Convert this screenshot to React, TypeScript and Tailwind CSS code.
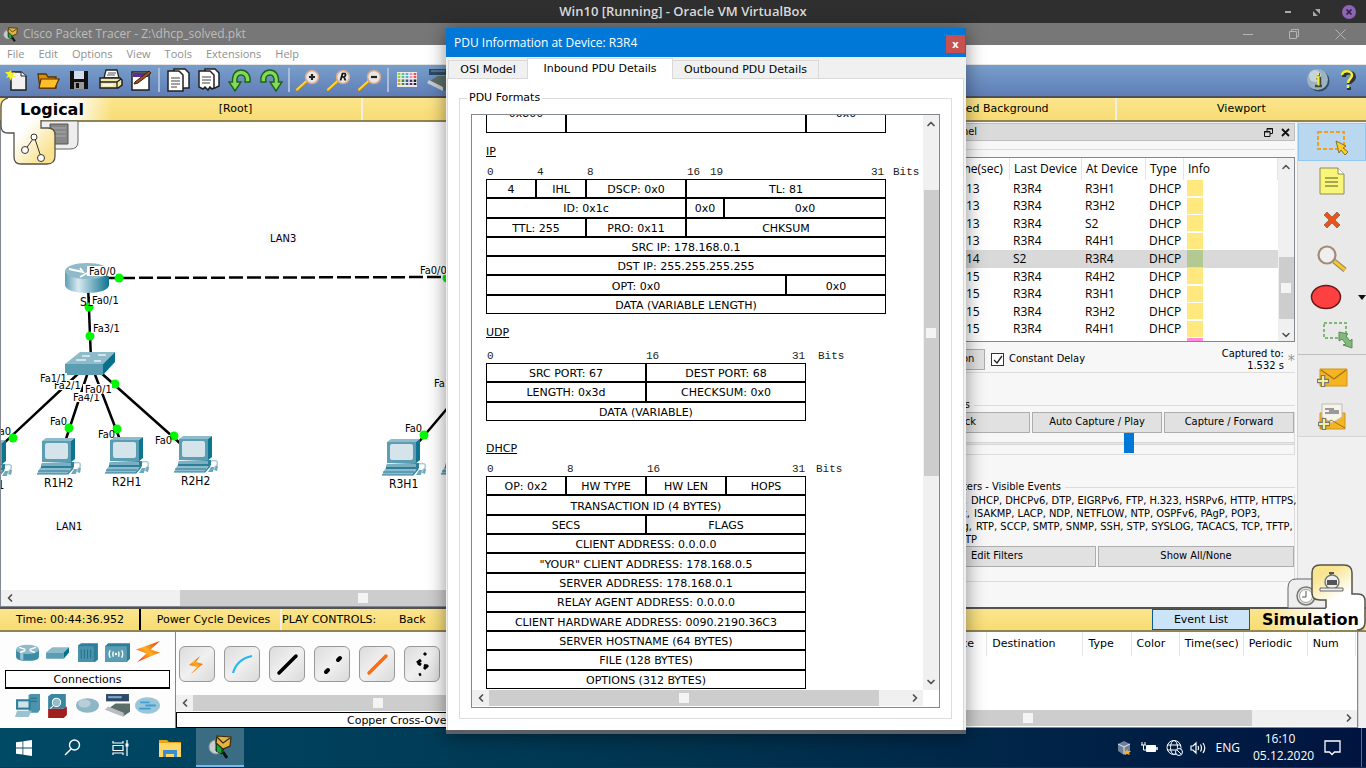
import type { ReactNode } from "react";
import { ChevronDown, ChevronLeft, ChevronRight, ChevronUp } from "lucide-react";

const verdana = "font-['DejaVu_Sans',Verdana,sans-serif]";
const tahoma = "font-['DejaVu_Sans_Condensed','Noto_Sans',Tahoma,sans-serif]";
const segoe = "font-['Open_Sans','Noto_Sans','Segoe_UI',sans-serif]";

/* ---------- small shared drawings ---------- */

function TracerLogo({ size }: { size: number }) {
  return (
    <svg width={size} height={size} viewBox="0 0 24 24" aria-hidden="true">
      <circle cx="8" cy="12" r="7" fill="#c9cdd0" stroke="#8d9294" />
      <path d="M15 17l4 6" stroke="#111" strokeWidth="3" />
      <path d="M8 5l9 5-3 9-6-3z" fill="#0b6b1c" stroke="#04300a" />
      <path d="M10 9v8M12 10v8" stroke="#37d957" strokeWidth="1" />
      <path d="M9 1l14 1-1 9-7 3-7-6z" fill="#e3b445" stroke="#3b2a06" strokeWidth="1.2" />
      <path d="M9 2l6 6 7-5" fill="none" stroke="#3b2a06" strokeWidth="1.2" />
    </svg>
  );
}

function HScroll({ before, thumb, end }: { before: string; thumb: string; end?: boolean }) {
  return (
    <div className="flex h-4 w-full items-center bg-[#f0f0f0]">
      <button aria-label="Scroll left" className="flex h-4 w-[17px] shrink-0 items-center justify-center text-[#505050]">
        <ChevronLeft size={12} strokeWidth={3.5} />
      </button>
      <div className={`h-full shrink-0 ${before}`} />
      <div className={`flex h-full items-center justify-center bg-[#cdcdcd] ${thumb}`}>
        <span className="size-[10px] bg-[#f4f4f4]" />
      </div>
      {end && (
        <button aria-label="Scroll right" className="ml-auto flex h-4 w-[17px] items-center justify-center text-[#505050]">
          <ChevronRight size={12} strokeWidth={3.5} />
        </button>
      )}
    </div>
  );
}

/* ---------- toolbar ---------- */

const toolIcons: Record<string, ReactNode> = {
  New: (
    <>
      <path d="M8 6h10l5 4v14H8z" fill="#f2f2f2" stroke="#222" strokeWidth="1.5" />
      <path d="M18 6v4h5" fill="#fff" stroke="#222" />
      <path d="M8 4l1 3 3-1-2 3 3 2-4 0-1 4-2-4-3 1 2-3-3-3 4 0z" fill="#f6f02a" />
    </>
  ),
  Open: (
    <>
      <path d="M4 8h8l2 3h8v11H6z" fill="#e08e00" stroke="#5a3200" strokeWidth="1.3" />
      <path d="M7 13h18l-4 9H5z" fill="#ffbf2b" stroke="#5a3200" strokeWidth="1.2" />
    </>
  ),
  Save: (
    <>
      <path d="M5 5h18v18H5z" fill="#111" />
      <path d="M9 5h10v8H9z" fill="#d5dbe8" />
      <path d="M9 16h10v7H9z" fill="#999" />
      <path d="M11 17h3v5h-3z" fill="#111" />
    </>
  ),
  Print: (
    <>
      <path d="M10 4h11l2 8H8z" fill="#fff" stroke="#222" strokeWidth="1.3" />
      <path d="M12 7h8M11 9h8" stroke="#555" />
      <path d="M4 12h20l2 2v5l-4 3H4z" fill="#efe9a8" stroke="#222" strokeWidth="1.5" />
      <path d="M4 16h17v6M21 16l4-3" fill="none" stroke="#222" strokeWidth="1.3" />
      <path d="M7 19h10" stroke="#fffbe0" strokeWidth="2" />
    </>
  ),
  Wizard: (
    <>
      <path d="M5 6h17v18H5z" fill="#fff" stroke="#222" strokeWidth="1.5" />
      <path d="M6 7h15v4H6z" fill="#5a2ca0" />
      <path d="M8 16L22 5l2 2-13 10-4 1z" fill="#a8501c" stroke="#321" />
    </>
  ),
  Copy: (
    <>
      <path d="M10 3h11l4 4v15H10z" fill="#fff" stroke="#222" strokeWidth="1.5" />
      <path d="M4 5h11l4 4v16H4z" fill="#fff" stroke="#222" strokeWidth="1.5" />
      <path d="M7 12h9M7 15h9M7 18h9M7 21h6" stroke="#444" strokeWidth="1.2" />
    </>
  ),
  Paste: (
    <>
      <path d="M10 3h10l4 4v13l-4 2H10z" fill="#fff" stroke="#222" strokeWidth="1.5" />
      <path d="M4 5h11l4 4v13l-2 1-2-2-2 3-3-3-2 2-4-2z" fill="#fff" stroke="#222" strokeWidth="1.5" />
      <path d="M7 11h9M7 14h9M7 17h8" stroke="#444" strokeWidth="1.2" />
    </>
  ),
  Undo: (
    <path
      d="M24 16c1-8-4-12-9-12S6 8 6.500 16H3l6 9 6-9h-4c-.5-5 1-7 4-7s5 2 4 7z"
      fill="#7fdc55"
      stroke="#245f1c"
      strokeWidth="1.4"
    />
  ),
  Redo: (
    <path
      d="M4 16C3 8 8 4 13 4s9 4 8.500 12H25l-6 9-6-9h4c.5-5-1-7-4-7s-5 2-4 7z"
      fill="#7fdc55"
      stroke="#245f1c"
      strokeWidth="1.4"
    />
  ),
  "Zoom In": <ZoomGlyph mark="+" />,
  "Zoom Reset": <ZoomGlyph mark="R" />,
  "Zoom Out": <ZoomGlyph mark="-" />,
  Palette: (
    <>
      <path d="M4 6h20v15H4z" fill="#efe9ec" />
      {["#8bd44a", "#52c98c", "#4ab4e0", "#ef8fb4", "#ef5050"].map((c, i) => (
        <path key={c} d={`M${6 + i * 4} 7v7`} stroke={c} strokeWidth="2.600" strokeDasharray="2 1" />
      ))}
      {["#c8a030", "#3a8a30", "#285a9c", "#50307c", "#202020"].map((c, i) => (
        <path key={c} d={`M${6 + i * 4} 14v6`} stroke={c} strokeWidth="2.600" strokeDasharray="2 1" />
      ))}
    </>
  ),
  Devices: (
    <>
      <path d="M5 3h22v6H5z" fill="#2e4a66" />
      <path d="M7 5h14" stroke="#7f9ab8" />
      <path d="M4 16l10-6h14v10l-8 5z" fill="#5c6e68" />
      <path d="M3 17l16 8v-4L5 14z" fill="#c9ccd0" />
    </>
  ),
};

function ZoomGlyph({ mark }: { mark: string }) {
  return (
    <>
      <path d="M3 24L13 15" stroke="#c08a10" strokeWidth="3" strokeLinecap="round" />
      <path d="M3 23.500L13 14.500" stroke="#ffd52e" strokeWidth="2" strokeLinecap="round" />
      <circle cx="18" cy="11" r="6.500" fill="#e9e6e6" stroke="#d9a98a" strokeWidth="1.600" />
      {mark === "+" && <path d="M15 11h6M18 8v6" stroke="#222" strokeWidth="2.200" />}
      {mark === "-" && <path d="M15 11h6" stroke="#222" strokeWidth="2.200" />}
      {mark === "R" && <path d="M15.500 14.500l2-7h2.500q1.500 2-1 3.500h-2 2l1.500 3.500" fill="none" stroke="#111" strokeWidth="1.700" />}
    </>
  );
}

function ToolGroup({ names }: { names: string[] }) {
  return (
    <div className="flex items-center">
      {names.map((n) => (
        <button key={n} aria-label={n} className="flex h-7 w-[31px] items-center justify-center">
          <svg width="28" height="28" viewBox="0 0 28 28" aria-hidden="true">
            {toolIcons[n]}
          </svg>
        </button>
      ))}
    </div>
  );
}

function Toolbar() {
  const groups = [
    ["New", "Open", "Save", "Print", "Wizard"],
    ["Copy", "Paste", "Undo", "Redo"],
    ["Zoom In", "Zoom Reset", "Zoom Out"],
    ["Palette", "Devices"],
  ];
  return (
    <div className="flex h-[33px] items-center border-b-2 border-[#4d4f59] bg-linear-to-b from-[#789fcb] to-[#5f7db6] pb-[2px] pl-px">
      {groups.map((g, i) => (
        <div key={g[0]} className="flex items-center">
          {i > 0 && <span className="mx-[2px] h-6 w-[2px] bg-[#a9bcd9]" />}
          <ToolGroup names={g} />
        </div>
      ))}
      <div className="ml-auto flex items-center gap-2 pr-2">
        <button aria-label="Info">
          <svg width="24" height="24" viewBox="0 0 24 24" aria-hidden="true">
            <circle cx="13" cy="13" r="10.500" fill="#2f4c63" />
            <circle cx="11.500" cy="11.500" r="10.500" fill="#9db4c0" />
            <circle cx="9" cy="8" r="6" fill="#c5d3da" />
            <path d="M10 10h4v8M9 18h7M12.500 5v3" stroke="#444" strokeWidth="2.500" fill="none" />
            <path d="M9.500 9.500h3v8M12 5v2.500" stroke="#f3f03a" strokeWidth="2" fill="none" />
          </svg>
        </button>
        <button aria-label="Help">
          <svg width="20" height="24" viewBox="0 0 20 24" aria-hidden="true">
            <path d="M6 9c0-6 10-6 10 0 0 4-5 4-5 7M11 19v3" stroke="#333" strokeWidth="4" fill="none" />
            <path d="M4 7c0-5 10-5 10 0 0 4-4 4-4 8M10 17v3" stroke="#f6f032" strokeWidth="2.500" fill="none" />
          </svg>
        </button>
      </div>
    </div>
  );
}

/* ---------- logical / root bar ---------- */

function WorkspaceBar() {
  const cell = "flex items-center justify-center border-l-2 border-[#f1efe6]";
  return (
    <div className={`relative flex h-6 border-b-2 border-[#8f8454] bg-linear-to-b from-[#fbe58d] to-[#f8dc72] text-[11px] ${verdana}`}>
      <svg className="absolute left-0 top-0 z-10" width="120" height="68" viewBox="0 0 120 68" aria-hidden="true">
        <defs>
          <linearGradient id="tabFade" x1="0" x2="1">
            <stop offset="0.6" stopColor="#fff" />
            <stop offset="1" stopColor="#fff" stopOpacity="0" />
          </linearGradient>
          <linearGradient id="tabGold" x1="0" x2="1" y1="0" y2="1">
            <stop offset="0.45" stopColor="#fff" />
            <stop offset="0.85" stopColor="#f9e391" />
          </linearGradient>
        </defs>
        <path d="M40 23h38v21q0 7-8 7H40z" fill="#eee" stroke="#666" />
        <path d="M50 26h18v20H50z" fill="#888" stroke="#555" />
        <path d="M52 30h14M52 34h14M52 38h14" stroke="#aaa" />
        <path d="M8 0h104v22H8z" fill="url(#tabFade)" />
        <path d="M8 0Q1 2 1 8v20q0 7 7 7h6v24q0 7 7 7h26q8 0 8-8V37q0-7-7-7h-7v-9V0z" fill="url(#tabGold)" />
        <path d="M8 0Q1 2 1 8v20q0 7 7 7h6v24q0 7 7 7h26q8 0 8-8V37q0-7-7-7h-7v-8" fill="none" stroke="#55534a" strokeWidth="1.300" />
        <path d="M33 41L25 52M35 41l6 18" stroke="#333" />
        <circle cx="34" cy="39" r="3" fill="#fff" stroke="#333" />
        <circle cx="25" cy="52" r="3.500" fill="#fff" stroke="#333" />
        <circle cx="41" cy="60" r="3.500" fill="#fff" stroke="#333" />
      </svg>
      <strong className="relative z-20 w-[110px] pl-5 text-base leading-[24px]">Logical</strong>
      <button className="w-[251px]">[Root]</button>
      <div className="grid flex-1 grid-cols-4">
        <button className={cell}>New Cluster</button>
        <button className={cell}>Move Object</button>
        <button className={cell}>Set Tiled Background</button>
        <button className={cell}>Viewport</button>
      </div>
    </div>
  );
}

/* ---------- topology ---------- */

function Pc({ x, y }: { x: number; y: number }) {
  return (
    <g transform={`translate(${x} ${y})`}>
      <path d="M37 25q8-2 6 4l-6 6" fill="none" stroke="#a9cbd8" strokeWidth="1.500" />
      <path d="M34 36l3-5h3l-1 5zM40 34l2-4h2l-1 5z" fill="#6fa7bb" />
      <path d="M5 3l4-3h29l-4 3z" fill="#8fbccc" />
      <path d="M34 3l4-3v21l-5 4z" fill="#0e7591" />
      <path d="M5 3h29v21H5z" fill="#5b9db3" />
      <rect x="8" y="5" width="23" height="16" rx="2" fill="#d4e4ea" />
      <path d="M5 25l32-1v5l-3 3H3z" fill="#2d7f99" />
      <path d="M5 25h29v3H4z" fill="#79afc1" />
      <path d="M3 30h32l-4 6H0z" fill="#8fbccc" />
      <path d="M1 33h31M0 36h31l5-6" fill="none" stroke="#2d7f99" strokeWidth="1.200" />
    </g>
  );
}

function Topology() {
  const dots = [
    [119, 278], [89, 307], [90, 336], [115, 384], [13, 438], [69, 428], [117, 429], [174, 436], [424, 435], [447, 278],
  ];
  const labels: [string, number, number][] = [
    ["Fa2/1", 54, 389], ["Fa4/1", 73, 401], ["Fa1/1", 40, 382], ["Fa0/1", 85, 393], ["Fa0/0", 89, 275],
    ["Fa0/1", 92, 304], ["Fa3/1", 93, 332], ["Fa0", -6, 435], ["Fa0", 50, 425], ["Fa0", 98, 438], ["Fa0", 155, 444],
    ["Fa0", 405, 432], ["Fa0/0", 420, 274], ["Fa1/1", 434, 387],
  ];
  const names: [string, number, number][] = [
    ["R1H1", -25, 489], ["R1H2", 44, 487], ["R2H1", 112, 486], ["R2H2", 181, 485], ["R3H1", 389, 488], ["S1", 80, 306],
  ];
  const areas: [string, number, number][] = [["LAN3", 270, 242], ["LAN1", 56, 530]];
  return (
    <svg width="838" height="468" viewBox="1 122 838 468" className={`block text-[11px] ${tahoma}`} role="img" aria-label="Network topology">
      <defs>
        <linearGradient id="router" x1="0" x2="1">
          <stop offset="0" stopColor="#5d9fb5" />
          <stop offset="0.3" stopColor="#d8e9ef" />
          <stop offset="1" stopColor="#0f7390" />
        </linearGradient>
      </defs>
      <g stroke="#000" strokeWidth="2.500" fill="none">
        <path d="M90 278L450 277" strokeDasharray="14 4" strokeDashoffset="5" />
        <path d="M88 285L91 360M80 372L-12 458M88 372L64 445M94 372L122 445M100 372L182 445M484 365L412 450" />
      </g>
      <rect x="266" y="232" width="31" height="12" fill="#f7f7ff" />
      <rect x="53" y="520" width="31" height="12" fill="#f7f7ff" />
      <path d="M65 271v14c0 5 10 8 22 8s22-3 22-8v-14z" fill="url(#router)" />
      <ellipse cx="87" cy="271" rx="22" ry="8" fill="#8fbaca" />
      <path d="M69 269l14 3-3-4M80 277l9-5" stroke="#fff" strokeWidth="1.800" fill="none" />
      <path d="M65 364l15-12h35l-12 12z" fill="#8fbaca" />
      <path d="M65 364h38v11H65z" fill="#5b9db3" />
      <path d="M103 364l12-12v10l-12 13z" fill="#07708c" />
      <path d="M76 360h10M82 356h8M94 361h7M98 355h8" stroke="#e6f2f6" strokeWidth="1.500" />
      <Pc x={-32} y={440} />
      <Pc x={37} y={438} />
      <Pc x={105} y={437} />
      <Pc x={174} y={436} />
      <Pc x={382} y={439} />
      <Pc x={441} y={438} />
      {dots.map(([x, y]) => (
        <circle key={`${x}-${y}`} cx={x} cy={y} r="4.500" fill="#00f900" />
      ))}
      {names.map(([t, x, y]) => (
        <text key={t} x={x} y={y} className="text-xs">{t}</text>
      ))}
      {areas.map(([t, x, y]) => (
        <text key={t} x={x} y={y}>{t}</text>
      ))}
      {labels.map(([t, x, y]) => (
        <g key={`${t}-${x}`}>
          <rect x={x - 2} y={y - 9} width={t.length * 6 - 1} height="10" fill="#fff" />
          <text x={x} y={y}>{t}</text>
        </g>
      ))}
    </svg>
  );
}

/* ---------- simulation panel ---------- */

const events = [
  ["0.013", "R3R4", "R3H1"],
  ["0.013", "R3R4", "R3H2"],
  ["0.013", "R3R4", "S2"],
  ["0.013", "R3R4", "R4H1"],
  ["0.014", "S2", "R3R4"],
  ["0.015", "R3R4", "R4H2"],
  ["0.015", "R3R4", "R3H1"],
  ["0.015", "R3R4", "R3H2"],
  ["0.015", "R3R4", "R4H1"],
];

const filterLines = [
  ["CDP,", "DHCP, DHCPv6, DTP, EIGRPv6, FTP, H.323, HSRPv6, HTTP, HTTPS,", "grid-cols-[127px_1fr]"],
  ["IPSec,", "ISAKMP, LACP, NDP, NETFLOW, NTP, OSPFv6, PAgP, POP3,", "grid-cols-[130px_1fr]"],
  ["RIPng,", "RTP, SCCP, SMTP, SNMP, SSH, STP, SYSLOG, TACACS, TCP, TFTP,", "grid-cols-[132px_1fr]"],
  ["VTP", "", "grid-cols-[137px_1fr]"],
];

const winButton = "h-[21px] border border-[#adadad] bg-[#e1e1e1]";

function SimulationPanel() {
  return (
    <section className={`flex w-[457px] shrink-0 flex-col bg-[#f7f7f7] pr-[2px] text-[11px] ${tahoma}`}>
      <header className="mt-px flex h-[18px] items-center border border-[#bdbdbd] bg-[#dadada] pl-[46px] pr-1">
        <span className="w-[90px] text-right">Simulation Panel</span>
        <button aria-label="Float panel" className="ml-auto mr-2">
          <svg width="9" height="9" viewBox="0 0 9 9" aria-hidden="true">
            <path d="M3 3V.5h5.500v5H6M.5 3.500H6v5H.5zM3 1h6M0 4h6" fill="none" stroke="#111" />
          </svg>
        </button>
        <button aria-label="Close panel">
          <svg width="9" height="9" viewBox="0 0 9 9" aria-hidden="true">
            <path d="M1 1l7 7M8 1L1 8" stroke="#111" strokeWidth="1.800" />
          </svg>
        </button>
      </header>
      <div className="mt-2 border-t border-[#dcdcdc] pt-[7px]">
        <div className={`flex h-[185px] border border-[#828790] bg-white text-xs ${segoe}`}>
          <div className="min-w-0 flex-1 overflow-hidden">
            <table className="h-[180px] w-full table-fixed border-separate border-spacing-0 text-left">
              <colgroup>
                <col />
                <col className="w-[64px]" />
                <col className="w-[72px]" />
                <col className="w-[64px]" />
                <col className="w-[38px]" />
                <col className="w-[94px]" />
              </colgroup>
              <thead>
                <tr className="h-[22px]">
                  {["Vis.", "Time(sec)", "Last Device", "At Device", "Type", "Info"].map((h) => (
                    <th key={h} className="border-r border-[#e5e5e5] p-0 pl-1 font-normal whitespace-nowrap">{h}</th>
                  ))}
                </tr>
              </thead>
              <tbody>
                {events.map((e, i) => (
                  <tr key={i} className={i === 4 ? "bg-[#d9d9d9]" : ""}>
                    <td />
                    {e.map((c, k) => (
                      <td key={k} className="py-0 pl-[3px] leading-4">{c}</td>
                    ))}
                    <td className="py-0 pl-[3px] leading-4">DHCP</td>
                    <td className={i === 4 ? "p-0 pl-[3px]" : "p-0 pb-px pl-[3px]"}>
                      <div className={i === 4 ? "h-[17px] w-4 bg-[#b3c994]" : "h-4 w-4 bg-[#ffe97f]"} />
                    </td>
                  </tr>
                ))}
              </tbody>
            </table>
            <div className="flex justify-end pr-[75px]"><span className="h-1 w-4 bg-[#ff8ce0]" /></div>
          </div>
          <div className="flex w-4 flex-col items-center bg-[#f0f0f0] text-[#505050]">
            <button aria-label="Scroll up" className="py-[3px]"><ChevronUp size={12} strokeWidth={3} /></button>
            <div className="mt-[81px] flex h-[62px] w-[15px] items-center justify-center bg-[#cdcdcd]">
              <span className="size-[10px] bg-[#f4f4f4]" />
            </div>
            <button aria-label="Scroll down" className="mt-auto"><ChevronDown size={12} strokeWidth={3} /></button>
          </div>
        </div>
        <div className="mt-[7px] flex h-[24px] items-start border-b border-[#dcdcdc]">
          <button className={`${winButton} ml-[40px] w-[105px] whitespace-nowrap`}>Reset Simulation</button>
          <label className="ml-[6px] flex h-[21px] items-center gap-[5px]">
            <span className="relative flex">
              <input type="checkbox" defaultChecked className="size-[13px] appearance-none border border-[#333] bg-white" />
              <svg className="pointer-events-none absolute left-[2px] top-[2px]" width="10" height="10" viewBox="0 0 10 10" aria-hidden="true">
                <path d="M1 5l3 3 5-7" fill="none" stroke="#222" strokeWidth="1.300" />
              </svg>
            </span>
            Constant Delay
          </label>
          <p className="-mt-px ml-auto text-right leading-[12px]">Captured to:<br />1.532 s</p>
          <span className="ml-1 pt-1 text-base leading-4 text-[#999]">*</span>
        </div>
      </div>
      <div className="mt-6 flex items-center gap-1 leading-4">
        <span className="w-[130px] text-right">Play Controls</span>
        <span className="h-px flex-1 bg-[#dcdcdc]" />
      </div>
      <div className="-mt-px border-r border-b border-[#dcdcdc]">
        <div className="flex gap-[2px]">
          <button className={`${winButton} ml-[58px] w-[132px]`}>Back</button>
          <button className={`${winButton} flex-1`}>Auto Capture / Play</button>
          <button className={`${winButton} flex-1`}>Capture / Forward</button>
        </div>
        <input
          type="range"
          aria-label="Play speed"
          defaultValue={64}
          className="block h-[21px] w-full appearance-none bg-transparent [&::-webkit-slider-runnable-track]:h-[3px] [&::-webkit-slider-runnable-track]:border [&::-webkit-slider-runnable-track]:border-[#d6d6d6] [&::-webkit-slider-runnable-track]:bg-[#e7eaea] [&::-webkit-slider-thumb]:-mt-[10px] [&::-webkit-slider-thumb]:h-5 [&::-webkit-slider-thumb]:w-[10px] [&::-webkit-slider-thumb]:appearance-none [&::-webkit-slider-thumb]:bg-[#0078d7]"
        />
      </div>
      <div className="mt-6 flex items-center gap-1 leading-4">
        <span className="w-[221px] text-right">Event List Filters - Visible Events</span>
        <span className="h-px flex-1 bg-[#dcdcdc]" />
      </div>
      <div className="-mt-px border-r border-b border-[#dcdcdc] pb-[14px]">
        {filterLines.map(([head, rest, cols]) => (
          <p key={head} className={`grid gap-1 whitespace-nowrap leading-[13px] ${cols}`}>
            <span className="text-right">{head}</span>
            <span>{rest}</span>
          </p>
        ))}
        <div className="flex gap-[2px]">
          <button className={`${winButton} ml-[58px] flex-1`}>Edit Filters</button>
          <button className={`${winButton} w-[196px]`}>Show All/None</button>
        </div>
      </div>
    </section>
  );
}

/* ---------- right-hand tools ---------- */

function SideTools() {
  const item = "flex w-full items-center justify-center";
  return (
    <aside className="flex w-[69px] shrink-0 flex-col border-l border-[#d5d5d5] bg-[#f0f0f0]">
      <div className="mt-px flex flex-col bg-[#e9e9e9]">
        <button aria-label="Select" className={`${item} h-[38px] border border-[#91c9f0] bg-[#b9d7ee]`}>
          <svg width="32" height="28" viewBox="0 0 32 28" aria-hidden="true">
            <path d="M2 4h26v17H2z" fill="none" stroke="#f0a020" strokeWidth="2" strokeDasharray="4 2" />
            <path d="M20 13l3 12 2-3 4 5 3-3-5-4 3-2z" fill="#f8d030" stroke="#8a7020" />
          </svg>
        </button>
        <button aria-label="Place note" className={`${item} h-[39px]`}>
          <svg width="26" height="28" viewBox="0 0 26 28" aria-hidden="true">
            <path d="M1 1h18l6 6v20H1z" fill="#f8f577" stroke="#8a8a60" />
            <path d="M19 1v6h6" fill="#fff" stroke="#8a8a60" />
            <path d="M6 11h13M6 15h13M6 19h13" stroke="#8c8a4c" strokeWidth="1.500" />
          </svg>
        </button>
        <button aria-label="Delete" className={`${item} h-[39px]`}>
          <svg width="20" height="20" viewBox="0 0 20 20" aria-hidden="true">
            <path d="M2 5l3-3 5 5 5-5 3 3-5 5 5 5-3 3-5-5-5 5-3-3 5-5z" fill="#e8541c" stroke="#a87058" />
          </svg>
        </button>
        <button aria-label="Inspect" className={`${item} h-[39px]`}>
          <svg width="32" height="30" viewBox="0 0 32 30" aria-hidden="true">
            <path d="M18 17l11 9" stroke="#8b8062" strokeWidth="5" />
            <path d="M18 17l11 9" stroke="#f7c52c" strokeWidth="3" />
            <circle cx="11" cy="11" r="8.500" fill="#efefef" stroke="#a58b72" strokeWidth="2.200" />
          </svg>
        </button>
        <button aria-label="Draw ellipse" className={`${item} h-[38px] gap-4 pl-3`}>
          <svg width="32" height="26" viewBox="0 0 32 26" aria-hidden="true">
            <ellipse cx="16" cy="13" rx="14.500" ry="11.500" fill="#ff4040" stroke="#661a1a" strokeWidth="1.500" />
          </svg>
          <svg width="8" height="5" viewBox="0 0 8 5" aria-hidden="true"><path d="M0 0h8L4 5z" fill="#111" /></svg>
        </button>
        <button aria-label="Resize" className={`${item} h-[39px] border-b border-[#bdbdbd] pl-3`}>
          <svg width="30" height="28" viewBox="0 0 30 28" aria-hidden="true">
            <path d="M1 2h22v15H1z" fill="none" stroke="#7db877" strokeWidth="2" strokeDasharray="3 2" />
            <path d="M16 11l9 2-2 2 4 5 2-2v9l-9-3 3-1-4-5-3 2z" fill="#82b87c" stroke="#5c8c5a" />
          </svg>
        </button>
        <button aria-label="Add simple PDU" className={`${item} h-[42px] pt-1`}>
          <svg width="32" height="22" viewBox="0 0 32 22" aria-hidden="true">
            <path d="M4 2h27v17H4z" fill="#f6b520" stroke="#d09418" />
            <path d="M5 3l13 9L30 3" fill="none" stroke="#9c7320" strokeWidth="1.300" />
            <path d="M1 14h12M7 8v12" stroke="#777" strokeWidth="4.500" />
            <path d="M2 14h10M7 9v10" stroke="#edf0a0" strokeWidth="2.200" />
          </svg>
        </button>
        <button aria-label="Add complex PDU" className={`${item} h-10 border-b border-[#d5d5d5]`}>
          <svg width="30" height="30" viewBox="0 0 30 30" aria-hidden="true">
            <path d="M3 11h25v16H3z" fill="#f6b520" stroke="#d09418" />
            <path d="M5 2h20v13l-10 6-10-6z" fill="#f6f3e8" stroke="#bbb" />
            <path d="M8 7h9M8 11h14M12 9h10" stroke="#999" strokeWidth="2" />
            <path d="M3 26l11-8 14 8" fill="none" stroke="#9c7320" />
            <path d="M1 22h12M7 16v12" stroke="#777" strokeWidth="4.500" />
            <path d="M2 22h10M7 17v10" stroke="#edf0a0" strokeWidth="2.200" />
          </svg>
        </button>
      </div>
    </aside>
  );
}

/* ---------- play bar ---------- */

function PlayBar() {
  return (
    <div className={`relative flex h-[25px] items-center border-y-2 border-t-[#55534a] border-b-[#8f8454] bg-linear-to-b from-[#fbe58d] to-[#f8dc72] text-[11px] ${verdana}`}>
      <span className="flex h-full w-[141px] items-center border-r-2 border-black pt-[2px] pl-4 whitespace-nowrap">Time: 00:44:36.952</span>
      <button className="h-full w-[141px] border-r-2 border-[#f1efe6] pt-[2px] pl-[6px]">Power Cycle Devices</button>
      <span className="w-[117px] pt-[2px]">PLAY CONTROLS:</span>
      <button className="pt-[2px]">Back</button>
      <div className="relative z-20 ml-auto flex h-[21px]">
        <button className="h-full w-[98px] border border-[#0a5a9c] bg-[#cce4f7] pt-[2px]">Event List</button>
        <strong className="w-[116px] pl-3 text-base leading-[21px]">Simulation</strong>
      </div>
      <svg className="absolute -bottom-[2px] right-0 z-10" width="116" height="70" viewBox="0 0 116 70" aria-hidden="true">
        <defs>
          <linearGradient id="simFade" x1="0" x2="1">
            <stop offset="0" stopColor="#fff" stopOpacity="0" />
            <stop offset="0.7" stopColor="#fff" />
          </linearGradient>
          <linearGradient id="simGold" x1="0" x2="0.5" y1="0" y2="1">
            <stop offset="0.2" stopColor="#f9e58f" />
            <stop offset="0.6" stopColor="#fff" />
          </linearGradient>
        </defs>
        <path d="M38 46V26q0-9 8-9h32v29z" fill="#eee" stroke="#666" />
        <circle cx="56" cy="34" r="9" fill="#e8e8e0" stroke="#777" strokeWidth="1.500" />
        <circle cx="56" cy="34" r="6.500" fill="#fff" stroke="#999" />
        <path d="M56 29v6h-4" stroke="#555" fill="none" />
        <path d="M10 47h96v21H10z" fill="url(#simFade)" />
        <path d="M76 68V38h-6q-8 0-8-7V11q0-8 8-8h24q8 0 8 8v21h6q7 0 7 7v21q0 8-8 8z" fill="url(#simGold)" />
        <path d="M76 46v-8h-6q-8 0-8-7V11q0-8 8-8h24q8 0 8 8v21h6q7 0 7 7v21q0 8-8 8" fill="none" stroke="#55534a" strokeWidth="1.500" />
        <path d="M79 11h5M81 11v3" stroke="#555" strokeWidth="2" />
        <circle cx="82" cy="20" r="7" fill="#eee" stroke="#777" strokeWidth="1.500" />
        <path d="M77 18h10v5H77z" fill="#555" />
        <path d="M70 26h23v3H70z" fill="#eee" stroke="#666" />
      </svg>
    </div>
  );
}

/* ---------- bottom panels ---------- */

const deviceTop: [string, ReactNode][] = [
  ["Routers", <g key="r"><path d="M1 9v7c0 3 5 4 11 4s11-1 11-4V9z" fill="#3d8ca6" /><path d="M5 12v7h3v-7z" fill="#9cc4d2" /><ellipse cx="12" cy="9" rx="11" ry="4.500" fill="#8fbaca" /><path d="M4 7l6 2M20 7l-6 2M5 12l5-2M19 12l-5-2" stroke="#fff" strokeWidth="1.300" /></g>],
  ["Switches", <g key="s"><path d="M1 12l6-5h16l-5 5z" fill="#8fbaca" /><path d="M1 12h17v6H1z" fill="#5b9db3" /><path d="M18 12l5-5v5l-5 6z" fill="#07708c" /></g>],
  ["Hubs", <g key="h"><path d="M3 5l3-2h16v16l-3 2H3z" fill="#2b7f9a" /><path d="M3 6h15v15H3z" fill="#4b93ac" /><path d="M6 9v9M9 9v9M12 9v9M15 9v9" stroke="#26718a" /></g>],
  ["Wireless Devices", <g key="w"><path d="M0 6l3-3h21v15l-3 3H0z" fill="#2b7f9a" /><path d="M0 6h21v15H0z" fill="#5b9db3" /><path d="M5 10q-2 3 0 7M8 11q-1 2 0 5M16 10q2 3 0 7M13 11q1 2 0 5" stroke="#fff" strokeWidth="1.300" fill="none" /><circle cx="10.500" cy="13.500" r="1.200" fill="#fff" /></g>],
  ["Connections", <path key="b" d="M24 1L1 9l10 4L2 21l22-9-9-3z" fill="url(#boltFill)" />],
];

const deviceBottom: [string, ReactNode][] = [
  ["End Devices", <g key="e"><path d="M13 2l2-1h9v15l-2 3h-9z" fill="#4b93ac" /><path d="M15 5h6M15 8h6" stroke="#1f6c86" /><path d="M1 6h14v10H1z" fill="#2b7f9a" /><path d="M3 8h10v6H3z" fill="#cfe2e9" /><path d="M2 17h14l-3 6H0z" fill="#9ac2d0" /></g>],
  ["Security", <g key="s"><path d="M3 3l3-2h14v14H3z" fill="#3a86a2" /><path d="M3 15h15l3-2v8l-3 3H3z" fill="#a01e20" /><circle cx="11" cy="9" r="4" fill="#8fc0d2" stroke="#fff" /><path d="M8 12l-3 3" stroke="#fff" /></g>],
  ["WAN Emulation", <g key="w"><ellipse cx="12" cy="12" rx="11" ry="7" fill="#8db6c6" /><ellipse cx="9" cy="10" rx="6" ry="4" fill="#b8cfd9" /></g>],
  ["Custom Made Devices", <g key="c"><path d="M1 1h22v7H1z" fill="#2e4a66" /><path d="M3 4h13" stroke="#7fa8c8" strokeWidth="2" /><path d="M2 16l8-6h14v8l-6 4z" fill="#5c6e68" /><path d="M0 16l18 7v-4L3 13z" fill="#b9bcc0" /></g>],
  ["Multiuser Connection", <g key="m"><ellipse cx="12" cy="12" rx="12" ry="8" fill="#9cc6d8" /><path d="M5 9h9M10 12h10M4 15h11" stroke="#3c9fd4" strokeWidth="1.800" /></g>],
];

function DeviceRow({ items }: { items: [string, ReactNode][] }) {
  return (
    <div className="flex justify-between px-[10px]">
      {items.map(([name, art]) => (
        <button key={name} aria-label={name}>
          <svg width="25" height="25" viewBox="0 0 24 24" aria-hidden="true">{art}</svg>
        </button>
      ))}
    </div>
  );
}

const cables: [string, ReactNode][] = [
  ["Automatic", <path key="a" d="M21 9L10 18l8 2-6 7 12-10-7-2z" fill="url(#boltFill)" />],
  ["Console", <path key="c" d="M9 26Q13 12 28 9" stroke="#22b8f2" strokeWidth="2.200" fill="none" />],
  ["Copper Straight-Through", <path key="s" d="M10 26L27 9" stroke="#000" strokeWidth="3.500" strokeLinecap="round" />],
  ["Copper Cross-Over", <path key="x" d="M12 25l2-2M24 13l2-2" stroke="#000" strokeWidth="4" strokeLinecap="round" />],
  ["Fiber", <path key="f" d="M10 26L27 9" stroke="#ff6a10" strokeWidth="3.500" strokeLinecap="round" />],
  ["Phone", <path key="p" d="M20 8l2-2M13 16l4-3M14 16l3 2M24 18l-4 4M20 18l4 2M15 28l2-1" stroke="#000" strokeWidth="3" />],
];

function BottomPanels() {
  const pduCols: [string, string][] = [
    ["Fire", "w-[40px]"], ["Last Status", "w-[105px]"], ["Source", "w-[56px]"], ["Destination", "w-[96px]"], ["Type", "w-[48px]"],
    ["Color", "w-[48px]"], ["Time(sec)", "w-[64px]"], ["Periodic", "w-[64px]"], ["Num", "w-[48px]"],
  ];
  return (
    <div className={`flex h-24 bg-[#fdfdfd] text-[11px] ${verdana}`}>
      <svg width="0" height="0" className="absolute" aria-hidden="true">
        <defs>
          <linearGradient id="boltFill" x1="0" y1="1" x2="1" y2="0">
            <stop offset="0" stopColor="#ff2a10" />
            <stop offset="0.5" stopColor="#ffb020" />
            <stop offset="1" stopColor="#e03010" />
          </linearGradient>
        </defs>
      </svg>
      <div className="flex w-[175px] shrink-0 flex-col justify-between px-[5px] pt-2 pb-[10px]">
        <DeviceRow items={deviceTop} />
        <div className="border border-b-2 border-black bg-white pt-px text-center leading-[15px]">Connections</div>
        <DeviceRow items={deviceBottom} />
      </div>
      <div className="flex w-[446px] shrink-0 flex-col border-l border-[#828790]">
        <div className="flex flex-1 items-center gap-[9px] pl-[3px]">
          {cables.map(([name, art]) => (
            <button key={name} aria-label={name} className="size-9 rounded-md border border-[#999] bg-linear-to-br from-[#dcdcdc] via-[#f0f0f0] to-[#dadada]">
              <svg width="34" height="34" viewBox="1 0 34 34" aria-hidden="true">{art}</svg>
            </button>
          ))}
        </div>
        <HScroll before="w-0" thumb="w-[370px]" />
        <div className="mt-px h-[16px] border-y border-l border-black bg-white text-center leading-[15px]">Copper Cross-Over</div>
      </div>
      <div className="flex min-w-0 flex-1 bg-[#f0f0f0]">
        <div className="flex-1" />
        <div className="flex w-[572px] flex-col border-r border-b border-[#828790] bg-white">
          <table className="w-[570px] table-fixed border-separate border-spacing-0 text-left">
            <thead>
              <tr className="h-6">
                {pduCols.map(([c, w]) => (
                  <th key={c} className={`border-r border-[#e5e5e5] p-0 pl-[5px] font-normal whitespace-nowrap ${w}`}>{c}</th>
                ))}
              </tr>
            </thead>
          </table>
          <div className="mt-auto mb-px"><HScroll before="w-0" thumb="w-[449px]" end /></div>
        </div>
        <div className="w-[8px] border-l border-[#d5d5d5]" />
      </div>
    </div>
  );
}

/* ---------- taskbar ---------- */

function Taskbar() {
  return (
    <footer className={`flex h-10 items-stretch border-b border-[#2b2b2b] bg-linear-to-r from-[#004a66] via-[#00344f] to-[#001440] text-xs text-white ${segoe}`}>
      <button aria-label="Start" className="flex w-12 items-center justify-center">
        <svg width="16" height="16" viewBox="0 0 16 16" fill="#fff" aria-hidden="true">
          <path d="M0 2.300l6.500-.9v6.200H0zM7.300 1.300L16 0v7.600H7.300zM0 8.400h6.500v6.200L0 13.700zM7.300 8.400H16V16l-8.700-1.300z" />
        </svg>
      </button>
      <button aria-label="Search" className="flex w-12 items-center justify-center">
        <svg width="17" height="17" viewBox="0 0 17 17" fill="none" stroke="#fff" strokeWidth="1.400" aria-hidden="true">
          <circle cx="10.500" cy="6" r="5" /><path d="M7 10l-6 6" />
        </svg>
      </button>
      <button aria-label="Task View" className="flex w-12 items-center justify-center">
        <svg width="17" height="16" viewBox="0 0 17 16" fill="none" stroke="#fff" strokeWidth="1.200" aria-hidden="true">
          <path d="M1 1v2h10V1M1 5.500h10v5H1zM1 15v-2h10v2M15 0v16" /><path d="M13.500 5h3" strokeWidth="3" />
        </svg>
      </button>
      <button aria-label="File Explorer" className="flex w-[52px] items-center justify-center">
        <svg width="22" height="18" viewBox="0 0 22 18" aria-hidden="true">
          <path d="M0 1h8l2 2h12v15H0z" fill="#e8a317" /><path d="M0 4h22v14H0z" fill="#ffd766" /><path d="M4 11h14v7h-3v-3H7v3H4z" fill="#3b8ed0" />
        </svg>
      </button>
      <button aria-label="Cisco Packet Tracer" className="flex w-12 items-center justify-center border-b-2 border-[#76b9ed] bg-[#3a6d84]">
        <TracerLogo size={24} />
      </button>
      <div className="ml-auto flex items-center">
        <button aria-label="VirtualBox Guest Additions" className="mr-3">
          <svg width="13" height="14" viewBox="0 0 13 14" className="mr-[-2px]" aria-hidden="true">
            <path d="M6 0l6 3v7l-6 4-6-4V3z" fill="#6d8299" /><path d="M0 3l6 3 6-3M6 6v7" stroke="#dfe8f0" fill="none" />
            <path d="M9 8l1 2h3l-2 2 1 2-3-1-2 1v-2L5 10h3z" fill="#ffab1f" />
          </svg>
        </button>
        <button aria-label="Battery" className="mr-2">
          <svg width="17" height="12" viewBox="0 0 17 12" aria-hidden="true">
            <path d="M1 0v3M4 0v3M0 3h5M2.500 3v5h3" stroke="#fff" fill="none" /><path d="M5.500 3.500h9v6h-9z" fill="#fff" stroke="#fff" /><path d="M16 5v3" stroke="#fff" strokeWidth="1.500" />
          </svg>
        </button>
        <button aria-label="Network" className="mr-[7px]">
          <svg width="17" height="16" viewBox="0 0 17 16" fill="none" stroke="#fff" aria-hidden="true">
            <circle cx="8" cy="7.500" r="7" /><ellipse cx="8" cy="7.500" rx="3.500" ry="7" /><path d="M1 5h14M1 10h14" />
            <circle cx="13" cy="12" r="3.500" fill="#00204a" /><path d="M11 10l4 4" />
          </svg>
        </button>
        <button aria-label="Volume" className="mr-[9px]">
          <svg width="17" height="14" viewBox="0 0 17 14" fill="none" stroke="#fff" strokeWidth="1.200" aria-hidden="true">
            <path d="M1 5h2l3-3v10L3 9H1zM8 5q1 2 0 4M10.500 3.500q2 3.500 0 7M13 2q3.500 5 0 10" />
          </svg>
        </button>
        <button className="mr-[13px]">ENG</button>
        <button className="mr-[17px] w-[54px] pb-[2px] text-center leading-[17px] whitespace-nowrap">16:10<br />05.12.2020</button>
        <button aria-label="Notifications" className="mr-[20px] pt-px">
          <svg width="17" height="16" viewBox="0 0 17 16" fill="none" stroke="#fff" strokeWidth="1.300" aria-hidden="true">
            <path d="M1 1h15v11h-5.500L8 14.500 5.500 12H1z" />
          </svg>
        </button>
        <span className="h-full w-[5px] border-l border-[#5a6b88]" />
      </div>
    </footer>
  );
}

/* ---------- PDU dialog ---------- */

type Cell = [string, number];

function Bits({ marks }: { marks: [string, string][] }) {
  return (
    <p className="flex h-[14px] items-center pl-px font-['Liberation_Mono','Courier_New',monospace] text-[11px] leading-[14px] text-[#222]">
      {marks.map(([t, w]) => (
        <span key={t} className={`shrink-0 ${w}`}>{t}</span>
      ))}
    </p>
  );
}

function Packet({ cols, rows, className, label }: { cols: string[]; rows: Cell[][]; className: string; label: string }) {
  return (
    <table aria-label={label} className={`table-fixed border-separate border-spacing-0 text-center ${className}`}>
      <colgroup>
        {cols.map((c, i) => (
          <col key={i} className={c} />
        ))}
      </colgroup>
      <tbody>
        {rows.map((r, i) => (
          <tr key={i}>
            {r.map(([t, span], k) => (
              <td key={k} colSpan={span} className="border border-black p-0 pt-[3px] leading-[14px] whitespace-nowrap">{t}</td>
            ))}
          </tr>
        ))}
      </tbody>
    </table>
  );
}

const ipRows: Cell[][] = [
  [["4", 1], ["IHL", 1], ["DSCP: 0x0", 1], ["TL: 81", 3]],
  [["ID: 0x1c", 3], ["0x0", 1], ["0x0", 2]],
  [["TTL: 255", 2], ["PRO: 0x11", 1], ["CHKSUM", 3]],
  [["SRC IP: 178.168.0.1", 6]],
  [["DST IP: 255.255.255.255", 6]],
  [["OPT: 0x0", 5], ["0x0", 1]],
  [["DATA (VARIABLE LENGTH)", 6]],
];

const udpRows: Cell[][] = [
  [["SRC PORT: 67", 1], ["DEST PORT: 68", 1]],
  [["LENGTH: 0x3d", 1], ["CHECKSUM: 0x0", 1]],
  [["DATA (VARIABLE)", 2]],
];

const dhcpRows: Cell[][] = [
  [["OP: 0x2", 1], ["HW TYPE", 1], ["HW LEN", 1], ["HOPS", 1]],
  [["TRANSACTION ID (4 BYTES)", 4]],
  [["SECS", 2], ["FLAGS", 2]],
  [["CLIENT ADDRESS: 0.0.0.0", 4]],
  [['"YOUR" CLIENT ADDRESS: 178.168.0.5', 4]],
  [["SERVER ADDRESS: 178.168.0.1", 4]],
  [["RELAY AGENT ADDRESS: 0.0.0.0", 4]],
  [["CLIENT HARDWARE ADDRESS: 0090.2190.36C3", 4]],
  [["SERVER HOSTNAME (64 BYTES)", 4]],
  [["FILE (128 BYTES)", 4]],
  [["OPTIONS (312 BYTES)", 4]],
];

function PduDialog() {
  const tab = "flex items-center justify-center border border-[#d9d9d9]";
  return (
    <div
      role="dialog"
      aria-label="PDU Information"
      className={`absolute left-[446px] top-[28px] z-30 w-[520px] border-b-4 border-[#5c6064] bg-[#f0f0f0] text-[11px] text-black shadow-[0_2px_18px_rgba(0,0,0,0.45)] ${verdana}`}
    >
      <div className={`flex h-[29px] items-center bg-[#0078d7] pl-2 text-white ${segoe}`}>
        <h2 className="text-[12px]">PDU Information at Device: R3R4</h2>
        <button aria-label="Close" className="mt-[3px] ml-auto mr-px flex h-[18px] w-[19px] items-center justify-center bg-[#c75050] text-[11px] leading-3 font-bold">
          x
        </button>
      </div>
      <div role="tablist" className="flex h-[21px] items-end pl-[2px]">
        <button role="tab" aria-selected="false" className={`${tab} h-[18px] w-[80px] border-b-0 pt-px`}>OSI Model</button>
        <button role="tab" aria-selected="true" className={`${tab} relative z-10 -mb-px -ml-px h-[21px] w-[146px] border-b-0 bg-white`}>Inbound PDU Details</button>
        <button role="tab" aria-selected="false" className={`${tab} -ml-px h-[18px] w-[147px] border-b-0 pt-px`}>Outbound PDU Details</button>
      </div>
      <div className="mx-px mr-[2px] border border-[#d9d9d9] border-b-0 bg-white px-[11px] pt-3 pb-[11px]">
        <fieldset className="border border-[#dcdcdc] px-[11px] pt-[9px] pb-[10px]">
          <legend className="-ml-[4px] px-[2px] leading-[14px]">PDU Formats</legend>
          <div className="border border-[#828790] bg-white">
            <div className="flex h-[575px]">
              <div className="min-w-0 flex-1 overflow-hidden pl-[14px]">
                <Packet label="Ethernet header" className="-mt-[12px] h-[30px] w-[400px] [&_td]:align-top" cols={["w-[80px]", "w-[240px]", "w-[80px]"]} rows={[[["0x800", 1], ["", 1], ["0x0", 1]]]} />
                <h3 className="mt-3 leading-[14px] underline">IP</h3>
                <div className="mt-[6px]">
                  <Bits marks={[["0", "w-[50px]"], ["4", "w-[50px]"], ["8", "w-[100px]"], ["16", "w-[23px]"], ["19", "w-[161px]"], ["31", "w-[22px]"], ["Bits", "w-[30px]"]]} />
                  <Packet label="IP header" className="h-[135px] w-[400px]" cols={["w-[50px]", "w-[50px]", "w-[100px]", "w-[38px]", "w-[62px]", "w-[100px]"]} rows={ipRows} />
                </div>
                <h3 className="mt-3 leading-[14px] underline">UDP</h3>
                <div className="mt-[9px]">
                  <Bits marks={[["0", "w-[159px]"], ["16", "w-[146px]"], ["31", "w-[26px]"], ["Bits", "w-[30px]"]]} />
                  <Packet label="UDP header" className="h-[58px] w-[320px]" cols={["w-[160px]", "w-[160px]"]} rows={udpRows} />
                </div>
                <h3 className="mt-[21px] leading-[14px] underline">DHCP</h3>
                <div className="mt-[6px]">
                  <Bits marks={[["0", "w-[80px]"], ["8", "w-[80px]"], ["16", "w-[145px]"], ["31", "w-[24px]"], ["Bits", "w-[30px]"]]} />
                  <Packet label="DHCP message" className="h-[213px] w-[320px]" cols={["w-[80px]", "w-[80px]", "w-[80px]", "w-[80px]"]} rows={dhcpRows} />
                </div>
              </div>
              <div className="flex w-4 flex-col items-center bg-[#f0f0f0] text-[#505050]">
                <button aria-label="Scroll up" className="py-[3px]"><ChevronUp size={12} strokeWidth={3.5} /></button>
                <div className="mt-[57px] flex h-[286px] w-[15px] items-center justify-center bg-[#cdcdcd]">
                  <span className="size-[10px] bg-[#f4f4f4]" />
                </div>
                <button aria-label="Scroll down" className="mt-auto pb-[2px]"><ChevronDown size={12} strokeWidth={3.5} /></button>
              </div>
            </div>
            <div className="flex pr-4 pb-px"><HScroll before="w-0" thumb="w-[390px]" end /></div>
          </div>
        </fieldset>
      </div>
    </div>
  );
}

/* ---------- page ---------- */

export default function App() {
  return (
    <div className="relative flex min-h-screen flex-col overflow-hidden bg-[#f0f0f0] text-black">
      <div className="relative flex h-[23px] items-center justify-center bg-[#2f2f2f] pt-px font-['Open_Sans','Noto_Sans',sans-serif] text-[13px] font-semibold text-[#dcdcdc]">
        <h1>Win10 [Running] - Oracle VM VirtualBox</h1>
        <div className="absolute right-[10px] flex items-center gap-[22px]">
          <button aria-label="Minimize machine window" className="h-[2px] w-[6px] bg-[#aaa]" />
          <button aria-label="Restore machine window">
            <svg width="7" height="7" viewBox="0 0 7 7" fill="#aaa" aria-hidden="true"><path d="M2 0h5v5zM0 2l5 5H0z" /></svg>
          </button>
          <button aria-label="Close machine window" className="size-[14px] rounded-full bg-[#8d64b8]">
            <svg width="14" height="14" viewBox="0 0 14 14" aria-hidden="true"><path d="M4.500 4.500l5 5M9.500 4.500l-5 5" stroke="#2b2033" strokeWidth="1.600" /></svg>
          </button>
        </div>
      </div>
      <div className={`flex h-[22px] items-center bg-[#777] pl-[3px] text-xs text-[#bdbdbd] ${segoe}`}>
        <TracerLogo size={15} />
        <span className="ml-[5px]">Cisco Packet Tracer - Z:\dhcp_solved.pkt</span>
        <div className="ml-auto flex items-center gap-9 pr-5">
          <button aria-label="Minimize" className="h-px w-[10px] bg-[#b5b5b5]" />
          <button aria-label="Restore">
            <svg width="10" height="10" viewBox="0 0 10 10" fill="none" stroke="#b5b5b5" aria-hidden="true"><path d="M.5 2.500h7v7h-7zM2.500 2.500v-2h7v7h-2" /></svg>
          </button>
          <button aria-label="Close">
            <svg width="11" height="11" viewBox="0 0 11 11" stroke="#b5b5b5" aria-hidden="true"><path d="M.5.5l10 10M10.500.5l-10 10" /></svg>
          </button>
        </div>
      </div>
      <nav className={`flex h-5 items-center gap-[14px] border-b border-[#e5e5e5] bg-white pl-[7px] text-[11px] text-[#8f8f8f] ${segoe}`}>
        {["File", "Edit", "Options", "View", "Tools", "Extensions", "Help"].map((m) => (
          <button key={m}>{m}</button>
        ))}
      </nav>
      <Toolbar />
      <WorkspaceBar />
      <main className="flex flex-1">
        <div className="flex min-w-0 flex-1 flex-col overflow-hidden border-b border-l border-[#828790] bg-white">
          <Topology />
          <div className="mt-auto"><HScroll before="w-[162px]" thumb="w-[366px]" /></div>
        </div>
        <SimulationPanel />
        <SideTools />
      </main>
      <PlayBar />
      <BottomPanels />
      <Taskbar />
      <PduDialog />
    </div>
  );
}
